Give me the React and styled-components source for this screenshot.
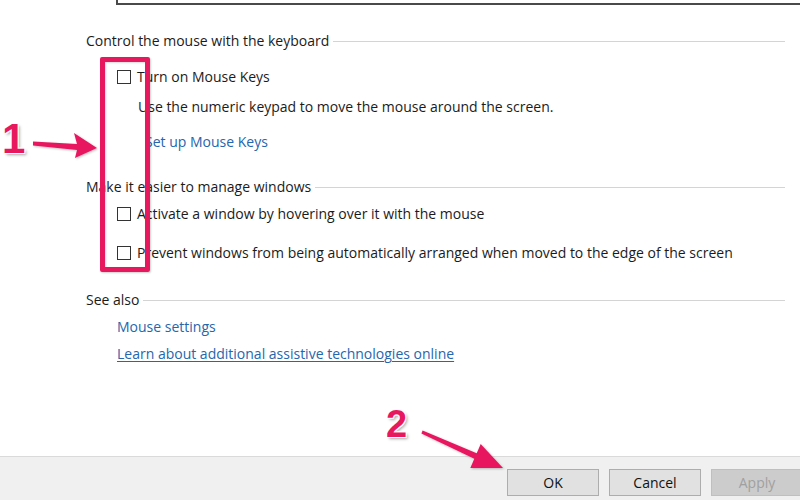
import styled, { createGlobalStyle } from "styled-components";

const GlobalStyle = createGlobalStyle`
    *, *::before, *::after {
        box-sizing: border-box;
    }

    body {
        margin: 0;
        background: #ffffff;
        font-family: "Open Sans", "Noto Sans", sans-serif;
    }
`;

function App() {
    return (
        <>
            <GlobalStyle />
            <Page>
                <TopBox />
                <Content>
                    <Heading>
                        <HeadingText>Control the mouse with the keyboard</HeadingText>
                        <Rule />
                    </Heading>
                    <CheckRow top="16px">
                        <Box />
                        <Label>Turn on Mouse Keys</Label>
                    </CheckRow>
                    <Line top="10px" indent="52px">Use the numeric keypad to move the mouse around the screen.</Line>
                    <Line top="15px" indent="59px">
                        <Link>Set up Mouse Keys</Link>
                    </Line>

                    <Heading top="25px">
                        <HeadingText>Make it easier to manage windows</HeadingText>
                        <Rule />
                    </Heading>
                    <CheckRow top="7px">
                        <Box />
                        <Label>Activate a window by hovering over it with the mouse</Label>
                    </CheckRow>
                    <CheckRow top="19px">
                        <Box />
                        <Label>Prevent windows from being automatically arranged when moved to the edge of the screen</Label>
                    </CheckRow>

                    <Heading top="27px">
                        <HeadingText>See also</HeadingText>
                        <Rule />
                    </Heading>
                    <Line top="7px" indent="31px">
                        <Link>Mouse settings</Link>
                    </Line>
                    <Line top="7px" indent="31px">
                        <Link underline>Learn about additional assistive technologies online</Link>
                    </Line>
                </Content>

                <Footer>
                    <Button>OK</Button>
                    <Button>Cancel</Button>
                    <Button disabled>Apply</Button>
                </Footer>

                <Marker />
                <Number left="2px" top="118px" size="42px">1</Number>
                <Number left="386px" top="405px" size="38px">2</Number>
                <Arrows viewBox="0 0 800 500" width="800" height="500">
                    <defs>
                        <filter id="soft" x="-20%" y="-20%" width="140%" height="140%">
                            <feDropShadow dx="1" dy="1" stdDeviation="1" floodColor="#000" floodOpacity="0.25" />
                        </filter>
                    </defs>
                    <polygon
                        filter="url(#soft)"
                        fill="#e8185f"
                        points="33,141.5 77,144 74,133 97,148 75,158 77,150 33,145.5"
                    />
                    <polygon
                        filter="url(#soft)"
                        fill="#e8185f"
                        points="422.6,430.6 476.7,453.2 480.7,444.1 503,468 470.3,467.9 474.3,458.8 421.4,433.4"
                    />
                </Arrows>
            </Page>
        </>
    );
}

const Page = styled.div`
    position: relative;
    width: 800px;
    height: 500px;
    overflow: hidden;
    background: #ffffff;
    color: #1b1b1b;
    display: flex;
    flex-direction: column;
`;

const TopBox = styled.div`
    height: 5px;
    margin-left: 116px;
    margin-right: -10px;
    border-left: 2px solid #4a4a4a;
    border-bottom: 2px solid #4a4a4a;
    flex-shrink: 0;
`;

const Content = styled.div`
    padding: 26px 15px 0 86px;
    display: flex;
    flex-direction: column;
    flex: 1;
    min-height: 0;
`;

const Heading = styled.div`
    display: flex;
    align-items: center;
    height: 20px;
    flex-shrink: 0;
    margin-top: ${(p) => p.top || "0"};
`;

const HeadingText = styled.span`
    font-size: 14px;
    line-height: 20px;
    white-space: nowrap;
    padding-right: 4px;
`;

const Rule = styled.div`
    flex: 1;
    height: 1px;
    background: #d4d4d4;
    margin-top: 1px;
`;

const CheckRow = styled.div`
    display: flex;
    align-items: center;
    height: 20px;
    flex-shrink: 0;
    margin-top: ${(p) => p.top};
    padding-left: 31px;
`;

const Box = styled.span`
    width: 14px;
    height: 14px;
    border: 1px solid #333333;
    background: #ffffff;
    margin-right: 6px;
    flex-shrink: 0;
`;

const Label = styled.span`
    font-size: 14px;
    line-height: 20px;
    white-space: nowrap;
`;

const Line = styled.div`
    height: 20px;
    flex-shrink: 0;
    line-height: 20px;
    font-size: 14px;
    margin-top: ${(p) => p.top};
    padding-left: ${(p) => p.indent};
    white-space: nowrap;
`;

const Link = styled.span`
    color: #2566ad;
    text-decoration: ${(p) => (p.underline ? "underline" : "none")};
    text-underline-offset: 2px;
`;

const Footer = styled.div`
    height: 44px;
    flex-shrink: 0;
    background: #f0f0f0;
    border-top: 1px solid #dadada;
    display: flex;
    align-items: flex-start;
    gap: 10px;
    padding: 12px 0 0 507px;
`;

const Button = styled.button`
    width: 92px;
    height: 27px;
    flex-shrink: 0;
    font-family: "Open Sans", "Noto Sans", sans-serif;
    font-size: 14px;
    color: #111111;
    background: #e1e1e1;
    border: 1px solid #adadad;
    padding: 0;

    &:disabled {
        color: #a0a0a0;
        background: #cccccc;
        border-color: #bfbfbf;
    }
`;

const Marker = styled.div`
    position: absolute;
    left: 100px;
    top: 57px;
    width: 50px;
    height: 215px;
    border: 5px solid #e8185f;
    border-radius: 2px;
    box-shadow: 1px 1px 2px rgba(0, 0, 0, 0.2), inset 1px 1px 2px rgba(0, 0, 0, 0.15);
`;

const Number = styled.span`
    position: absolute;
    left: ${(p) => p.left};
    top: ${(p) => p.top};
    font-family: "Liberation Sans", Arial, sans-serif;
    font-weight: 900;
    font-size: ${(p) => p.size};
    line-height: 1;
    color: #e8185f;
    -webkit-text-stroke: 1px #ffffff;
    paint-order: stroke fill;
    text-shadow: 1px 1px 0 #ffffff, -1px -1px 0 #ffffff, 1px -1px 0 #ffffff, -1px 1px 0 #ffffff,
        2px 2px 3px rgba(0, 0, 0, 0.35);
`;

const Arrows = styled.svg`
    position: absolute;
    left: 0;
    top: 0;
    pointer-events: none;
`;

export default App;
